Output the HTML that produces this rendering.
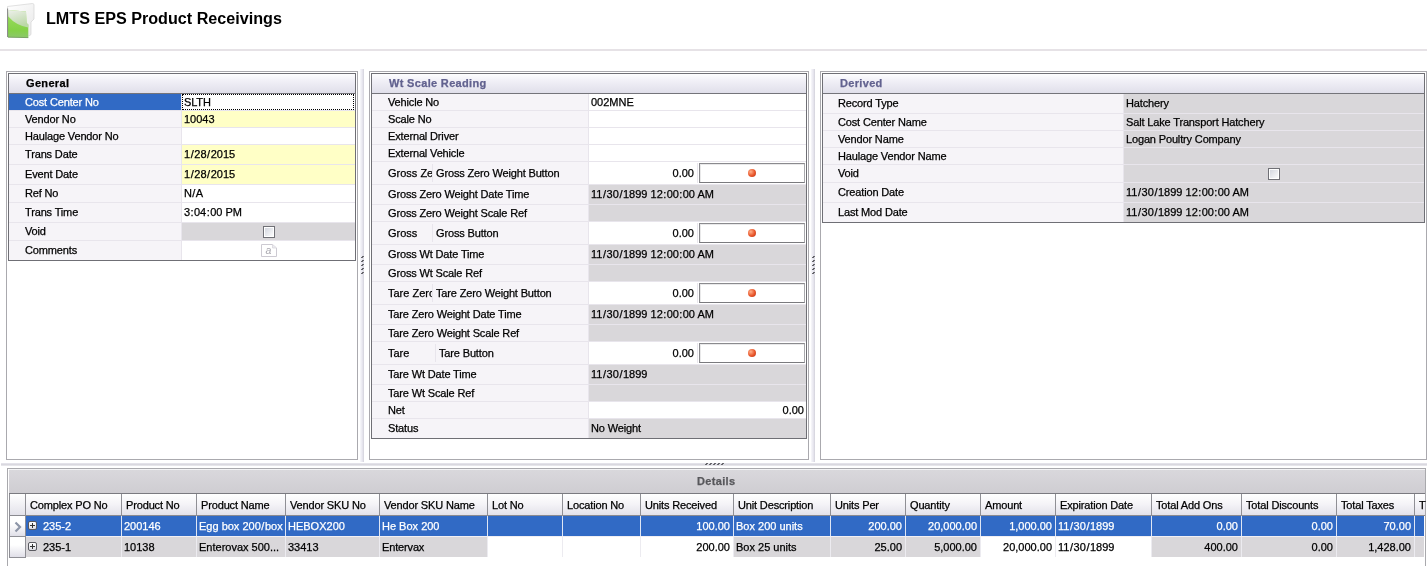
<!DOCTYPE html>
<html><head><meta charset="utf-8"><style>
html,body{margin:0;padding:0;background:#fff;width:1427px;height:566px;overflow:hidden;position:relative;}
.a{position:absolute;box-sizing:content-box;}
.t{font-family:"Liberation Sans",sans-serif;font-size:11px;color:#000;white-space:nowrap;-webkit-text-stroke:0.25px currentColor;}
</style></head><body><div class="a" style="left:0;top:0;width:1427px;height:566px;overflow:hidden;will-change:transform;">
<div class="a t" style="left:46px;top:8px;height:20px;line-height:20px;font-size:16.15px;font-weight:bold;letter-spacing:0;-webkit-text-stroke:0;">LMTS EPS Product Receivings</div>
<div class="a" style="left:0px;top:49px;width:1427px;height:2px;background:#e6e2e6;"></div>
<svg class="a" style="left:0px;top:0px" width="40" height="42" viewBox="0 0 40 42">
<defs>
<linearGradient id="pg" x1="0" y1="0" x2="1" y2="1"><stop offset="0" stop-color="#ffffff"/><stop offset="1" stop-color="#e8e8e8"/></linearGradient>
<linearGradient id="tg" x1="0" y1="0" x2="0.4" y2="1"><stop offset="0" stop-color="#eef0ec"/><stop offset="1" stop-color="#bcd8a8"/></linearGradient>
<linearGradient id="gg" x1="0" y1="0" x2="0" y2="1"><stop offset="0" stop-color="#9ee060"/><stop offset="0.75" stop-color="#84d048"/><stop offset="1" stop-color="#8cc86a"/></linearGradient>
</defs>
<path d="M7.5 6.5 L32.5 3.5 Q34 3.5 34 5 L34 19 L31 22 L31 34.5 L29 36 L7.5 37 Z" fill="url(#pg)" stroke="#d4d4d4" stroke-width="0.7"/>
<path d="M8 10 L26 11.5 L26.5 23 L28.3 24.5 L28.3 37.5 L8 37 Z" fill="url(#gg)"/>
<path d="M8 10 L26 11.5 L26.5 23 L28.3 24.5 L28.3 27.5 Q16 25.5 8.3 16.5 Z" fill="url(#tg)"/>
<path d="M7.6 8.5 L7.6 37" stroke="#7a7a7a" stroke-width="0.9"/>
<path d="M8 37.2 L28.3 37.6" stroke="#6f9a58" stroke-width="0.9"/>
</svg>
<div class="a" style="left:6px;top:71px;width:350px;height:387px;border:1px solid #aaa9ae;"></div>
<div class="a" style="left:8px;top:73px;width:346px;height:186px;border:1px solid #6f6f75;"></div>
<div class="a" style="left:9px;top:74px;width:346px;height:19px;background:linear-gradient(#fdfdfe,#f1f0f7 35%,#e0dfea);"></div>
<div class="a" style="left:9px;top:93px;width:346px;height:1px;background:#74747a;"></div>
<div class="a t" style="left:26px;top:74px;height:18px;line-height:18px;font-weight:bold;color:#000;letter-spacing:0.33px;">General</div>
<div class="a" style="left:9px;top:94px;width:172px;height:16px;background:#316ac5;"></div>
<div class="a" style="left:181px;top:94px;width:1px;height:16px;background:#e8e5ec;"></div>
<div class="a" style="left:182px;top:94px;width:173px;height:16px;background:white;"></div>
<div class="a" style="left:9px;top:110px;width:346px;height:1px;background:#e8e5ec;"></div>
<div class="a t" style="left:25px;top:94px;height:16px;line-height:16px;letter-spacing:-0.15px;color:#ffffff;">Cost Center No</div>
<div class="a t" style="left:184px;top:94px;height:16px;line-height:16px;letter-spacing:-0.15px;">SLTH</div>
<div class="a" style="left:9px;top:111px;width:172px;height:16px;background:#f6f4f8;"></div>
<div class="a" style="left:181px;top:111px;width:1px;height:16px;background:#e8e5ec;"></div>
<div class="a" style="left:182px;top:111px;width:173px;height:16px;background:#ffffc6;"></div>
<div class="a" style="left:9px;top:127px;width:346px;height:1px;background:#e8e5ec;"></div>
<div class="a t" style="left:25px;top:111px;height:16px;line-height:16px;letter-spacing:-0.15px;color:#000;">Vendor No</div>
<div class="a t" style="left:184px;top:111px;height:16px;line-height:16px;">10043</div>
<div class="a" style="left:9px;top:128px;width:172px;height:16px;background:#f6f4f8;"></div>
<div class="a" style="left:181px;top:128px;width:1px;height:16px;background:#e8e5ec;"></div>
<div class="a" style="left:182px;top:128px;width:173px;height:16px;background:#ffffff;"></div>
<div class="a" style="left:9px;top:144px;width:346px;height:1px;background:#e8e5ec;"></div>
<div class="a t" style="left:25px;top:128px;height:16px;line-height:16px;letter-spacing:-0.15px;color:#000;">Haulage Vendor No</div>
<div class="a" style="left:9px;top:145px;width:172px;height:19px;background:#f6f4f8;"></div>
<div class="a" style="left:181px;top:145px;width:1px;height:19px;background:#e8e5ec;"></div>
<div class="a" style="left:182px;top:145px;width:173px;height:19px;background:#ffffc6;"></div>
<div class="a" style="left:9px;top:164px;width:346px;height:1px;background:#e8e5ec;"></div>
<div class="a t" style="left:25px;top:146px;height:16px;line-height:16px;letter-spacing:-0.15px;color:#000;">Trans Date</div>
<div class="a t" style="left:184px;top:146px;height:16px;line-height:16px;">1<span style="padding:0 0.55px">/</span>28<span style="padding:0 0.55px">/</span>2015</div>
<div class="a" style="left:9px;top:165px;width:172px;height:19px;background:#f6f4f8;"></div>
<div class="a" style="left:181px;top:165px;width:1px;height:19px;background:#e8e5ec;"></div>
<div class="a" style="left:182px;top:165px;width:173px;height:19px;background:#ffffc6;"></div>
<div class="a" style="left:9px;top:184px;width:346px;height:1px;background:#e8e5ec;"></div>
<div class="a t" style="left:25px;top:166px;height:16px;line-height:16px;letter-spacing:-0.15px;color:#000;">Event Date</div>
<div class="a t" style="left:184px;top:166px;height:16px;line-height:16px;">1<span style="padding:0 0.55px">/</span>28<span style="padding:0 0.55px">/</span>2015</div>
<div class="a" style="left:9px;top:185px;width:172px;height:17px;background:#f6f4f8;"></div>
<div class="a" style="left:181px;top:185px;width:1px;height:17px;background:#e8e5ec;"></div>
<div class="a" style="left:182px;top:185px;width:173px;height:17px;background:#ffffff;"></div>
<div class="a" style="left:9px;top:202px;width:346px;height:1px;background:#e8e5ec;"></div>
<div class="a t" style="left:25px;top:185px;height:16px;line-height:16px;letter-spacing:-0.15px;color:#000;">Ref No</div>
<div class="a t" style="left:184px;top:185px;height:16px;line-height:16px;letter-spacing:-0.15px;">N<span style="padding:0 0.55px">/</span>A</div>
<div class="a" style="left:9px;top:203px;width:172px;height:19px;background:#f6f4f8;"></div>
<div class="a" style="left:181px;top:203px;width:1px;height:19px;background:#e8e5ec;"></div>
<div class="a" style="left:182px;top:203px;width:173px;height:19px;background:#ffffff;"></div>
<div class="a" style="left:9px;top:222px;width:346px;height:1px;background:#e8e5ec;"></div>
<div class="a t" style="left:25px;top:204px;height:16px;line-height:16px;letter-spacing:-0.15px;color:#000;">Trans Time</div>
<div class="a t" style="left:184px;top:204px;height:16px;line-height:16px;">3<span style="padding:0 0.42px">:</span>04<span style="padding:0 0.42px">:</span>00 PM</div>
<div class="a" style="left:9px;top:223px;width:172px;height:17px;background:#f6f4f8;"></div>
<div class="a" style="left:181px;top:223px;width:1px;height:17px;background:#e8e5ec;"></div>
<div class="a" style="left:182px;top:223px;width:173px;height:17px;background:#d9d7da;"></div>
<div class="a" style="left:9px;top:240px;width:346px;height:1px;background:#e8e5ec;"></div>
<div class="a t" style="left:25px;top:223px;height:16px;line-height:16px;letter-spacing:-0.15px;color:#000;">Void</div>
<div class="a" style="left:9px;top:241px;width:172px;height:19px;background:#f6f4f8;"></div>
<div class="a" style="left:181px;top:241px;width:1px;height:19px;background:#e8e5ec;"></div>
<div class="a" style="left:182px;top:241px;width:173px;height:19px;background:#ffffff;"></div>
<div class="a t" style="left:25px;top:242px;height:16px;line-height:16px;letter-spacing:-0.15px;color:#000;">Comments</div>
<div class="a" style="left:182px;top:94px;width:170px;height:14px;border:1px dotted #000;"></div>
<div class="a" style="left:263px;top:226px;width:10px;height:10px;border:1px solid #707076;background:linear-gradient(135deg,#d0d3dc,#ffffff);box-shadow:inset 0 0 0 1px #fff;"></div>
<svg class="a" style="left:260px;top:243px" width="18" height="15" viewBox="0 0 18 15"><path d="M1.5 1.5 L12.5 1.5 L16.5 5 L16.5 13.5 L1.5 13.5 Z" fill="#fff" stroke="#cdcad2" stroke-width="1"/><path d="M12.5 1.5 L12.5 5 L16.5 5" fill="#ecebf0" stroke="#d8d6dc" stroke-width="0.8"/><text x="5.5" y="11" font-family="Liberation Sans" font-style="italic" font-size="10.5" fill="#a8a6ae">a</text></svg>
<div class="a" style="left:369px;top:71px;width:438px;height:387px;border:1px solid #aaa9ae;"></div>
<div class="a" style="left:371px;top:73px;width:434px;height:364px;border:1px solid #6f6f75;"></div>
<div class="a" style="left:372px;top:74px;width:434px;height:19px;background:linear-gradient(#fdfdfe,#f1f0f7 35%,#e0dfea);"></div>
<div class="a" style="left:372px;top:93px;width:434px;height:1px;background:#74747a;"></div>
<div class="a t" style="left:389px;top:74px;height:18px;line-height:18px;font-weight:bold;color:#62628f;letter-spacing:0.33px;">Wt Scale Reading</div>
<div class="a" style="left:372px;top:94px;width:216px;height:16px;background:#f6f4f8;"></div>
<div class="a" style="left:588px;top:94px;width:1px;height:16px;background:#e8e5ec;"></div>
<div class="a" style="left:589px;top:94px;width:217px;height:16px;background:#ffffff;"></div>
<div class="a" style="left:372px;top:110px;width:434px;height:1px;background:#e8e5ec;"></div>
<div class="a t" style="left:388px;top:94px;height:16px;line-height:16px;letter-spacing:-0.15px;color:#000;">Vehicle No</div>
<div class="a t" style="left:591px;top:94px;height:16px;line-height:16px;">002MNE</div>
<div class="a" style="left:372px;top:111px;width:216px;height:16px;background:#f6f4f8;"></div>
<div class="a" style="left:588px;top:111px;width:1px;height:16px;background:#e8e5ec;"></div>
<div class="a" style="left:589px;top:111px;width:217px;height:16px;background:#ffffff;"></div>
<div class="a" style="left:372px;top:127px;width:434px;height:1px;background:#e8e5ec;"></div>
<div class="a t" style="left:388px;top:111px;height:16px;line-height:16px;letter-spacing:-0.15px;color:#000;">Scale No</div>
<div class="a" style="left:372px;top:128px;width:216px;height:16px;background:#f6f4f8;"></div>
<div class="a" style="left:588px;top:128px;width:1px;height:16px;background:#e8e5ec;"></div>
<div class="a" style="left:589px;top:128px;width:217px;height:16px;background:#ffffff;"></div>
<div class="a" style="left:372px;top:144px;width:434px;height:1px;background:#e8e5ec;"></div>
<div class="a t" style="left:388px;top:128px;height:16px;line-height:16px;letter-spacing:-0.15px;color:#000;">External Driver</div>
<div class="a" style="left:372px;top:145px;width:216px;height:16px;background:#f6f4f8;"></div>
<div class="a" style="left:588px;top:145px;width:1px;height:16px;background:#e8e5ec;"></div>
<div class="a" style="left:589px;top:145px;width:217px;height:16px;background:#ffffff;"></div>
<div class="a" style="left:372px;top:161px;width:434px;height:1px;background:#e8e5ec;"></div>
<div class="a t" style="left:388px;top:145px;height:16px;line-height:16px;letter-spacing:-0.15px;color:#000;">External Vehicle</div>
<div class="a" style="left:372px;top:162px;width:216px;height:22px;background:#f6f4f8;"></div>
<div class="a" style="left:588px;top:162px;width:1px;height:22px;background:#e8e5ec;"></div>
<div class="a" style="left:589px;top:162px;width:217px;height:22px;background:#ffffff;"></div>
<div class="a" style="left:372px;top:184px;width:434px;height:1px;background:#e8e5ec;"></div>
<div class="a" style="left:372px;top:185px;width:216px;height:19px;background:#f6f4f8;"></div>
<div class="a" style="left:588px;top:185px;width:1px;height:19px;background:#e8e5ec;"></div>
<div class="a" style="left:589px;top:185px;width:217px;height:19px;background:#d9d7da;"></div>
<div class="a" style="left:372px;top:204px;width:434px;height:1px;background:#e8e5ec;"></div>
<div class="a t" style="left:388px;top:186px;height:16px;line-height:16px;letter-spacing:-0.15px;color:#000;">Gross Zero Weight Date Time</div>
<div class="a t" style="left:591px;top:186px;height:16px;line-height:16px;">11<span style="padding:0 0.55px">/</span>30<span style="padding:0 0.55px">/</span>1899 12<span style="padding:0 0.42px">:</span>00<span style="padding:0 0.42px">:</span>00 AM</div>
<div class="a" style="left:372px;top:205px;width:216px;height:16px;background:#f6f4f8;"></div>
<div class="a" style="left:588px;top:205px;width:1px;height:16px;background:#e8e5ec;"></div>
<div class="a" style="left:589px;top:205px;width:217px;height:16px;background:#d9d7da;"></div>
<div class="a" style="left:372px;top:221px;width:434px;height:1px;background:#e8e5ec;"></div>
<div class="a t" style="left:388px;top:205px;height:16px;line-height:16px;letter-spacing:-0.15px;color:#000;">Gross Zero Weight Scale Ref</div>
<div class="a" style="left:372px;top:222px;width:216px;height:22px;background:#f6f4f8;"></div>
<div class="a" style="left:588px;top:222px;width:1px;height:22px;background:#e8e5ec;"></div>
<div class="a" style="left:589px;top:222px;width:217px;height:22px;background:#ffffff;"></div>
<div class="a" style="left:372px;top:244px;width:434px;height:1px;background:#e8e5ec;"></div>
<div class="a" style="left:372px;top:245px;width:216px;height:19px;background:#f6f4f8;"></div>
<div class="a" style="left:588px;top:245px;width:1px;height:19px;background:#e8e5ec;"></div>
<div class="a" style="left:589px;top:245px;width:217px;height:19px;background:#d9d7da;"></div>
<div class="a" style="left:372px;top:264px;width:434px;height:1px;background:#e8e5ec;"></div>
<div class="a t" style="left:388px;top:246px;height:16px;line-height:16px;letter-spacing:-0.15px;color:#000;">Gross Wt Date Time</div>
<div class="a t" style="left:591px;top:246px;height:16px;line-height:16px;">11<span style="padding:0 0.55px">/</span>30<span style="padding:0 0.55px">/</span>1899 12<span style="padding:0 0.42px">:</span>00<span style="padding:0 0.42px">:</span>00 AM</div>
<div class="a" style="left:372px;top:265px;width:216px;height:16px;background:#f6f4f8;"></div>
<div class="a" style="left:588px;top:265px;width:1px;height:16px;background:#e8e5ec;"></div>
<div class="a" style="left:589px;top:265px;width:217px;height:16px;background:#d9d7da;"></div>
<div class="a" style="left:372px;top:281px;width:434px;height:1px;background:#e8e5ec;"></div>
<div class="a t" style="left:388px;top:265px;height:16px;line-height:16px;letter-spacing:-0.15px;color:#000;">Gross Wt Scale Ref</div>
<div class="a" style="left:372px;top:282px;width:216px;height:22px;background:#f6f4f8;"></div>
<div class="a" style="left:588px;top:282px;width:1px;height:22px;background:#e8e5ec;"></div>
<div class="a" style="left:589px;top:282px;width:217px;height:22px;background:#ffffff;"></div>
<div class="a" style="left:372px;top:304px;width:434px;height:1px;background:#e8e5ec;"></div>
<div class="a" style="left:372px;top:305px;width:216px;height:19px;background:#f6f4f8;"></div>
<div class="a" style="left:588px;top:305px;width:1px;height:19px;background:#e8e5ec;"></div>
<div class="a" style="left:589px;top:305px;width:217px;height:19px;background:#d9d7da;"></div>
<div class="a" style="left:372px;top:324px;width:434px;height:1px;background:#e8e5ec;"></div>
<div class="a t" style="left:388px;top:306px;height:16px;line-height:16px;letter-spacing:-0.15px;color:#000;">Tare Zero Weight Date Time</div>
<div class="a t" style="left:591px;top:306px;height:16px;line-height:16px;">11<span style="padding:0 0.55px">/</span>30<span style="padding:0 0.55px">/</span>1899 12<span style="padding:0 0.42px">:</span>00<span style="padding:0 0.42px">:</span>00 AM</div>
<div class="a" style="left:372px;top:325px;width:216px;height:16px;background:#f6f4f8;"></div>
<div class="a" style="left:588px;top:325px;width:1px;height:16px;background:#e8e5ec;"></div>
<div class="a" style="left:589px;top:325px;width:217px;height:16px;background:#d9d7da;"></div>
<div class="a" style="left:372px;top:341px;width:434px;height:1px;background:#e8e5ec;"></div>
<div class="a t" style="left:388px;top:325px;height:16px;line-height:16px;letter-spacing:-0.15px;color:#000;">Tare Zero Weight Scale Ref</div>
<div class="a" style="left:372px;top:342px;width:216px;height:22px;background:#f6f4f8;"></div>
<div class="a" style="left:588px;top:342px;width:1px;height:22px;background:#e8e5ec;"></div>
<div class="a" style="left:589px;top:342px;width:217px;height:22px;background:#ffffff;"></div>
<div class="a" style="left:372px;top:364px;width:434px;height:1px;background:#e8e5ec;"></div>
<div class="a" style="left:372px;top:365px;width:216px;height:19px;background:#f6f4f8;"></div>
<div class="a" style="left:588px;top:365px;width:1px;height:19px;background:#e8e5ec;"></div>
<div class="a" style="left:589px;top:365px;width:217px;height:19px;background:#d9d7da;"></div>
<div class="a" style="left:372px;top:384px;width:434px;height:1px;background:#e8e5ec;"></div>
<div class="a t" style="left:388px;top:366px;height:16px;line-height:16px;letter-spacing:-0.15px;color:#000;">Tare Wt Date Time</div>
<div class="a t" style="left:591px;top:366px;height:16px;line-height:16px;">11<span style="padding:0 0.55px">/</span>30<span style="padding:0 0.55px">/</span>1899</div>
<div class="a" style="left:372px;top:385px;width:216px;height:16px;background:#f6f4f8;"></div>
<div class="a" style="left:588px;top:385px;width:1px;height:16px;background:#e8e5ec;"></div>
<div class="a" style="left:589px;top:385px;width:217px;height:16px;background:#d9d7da;"></div>
<div class="a" style="left:372px;top:401px;width:434px;height:1px;background:#e8e5ec;"></div>
<div class="a t" style="left:388px;top:385px;height:16px;line-height:16px;letter-spacing:-0.15px;color:#000;">Tare Wt Scale Ref</div>
<div class="a" style="left:372px;top:402px;width:216px;height:16px;background:#f6f4f8;"></div>
<div class="a" style="left:588px;top:402px;width:1px;height:16px;background:#e8e5ec;"></div>
<div class="a" style="left:589px;top:402px;width:217px;height:16px;background:#ffffff;"></div>
<div class="a" style="left:372px;top:418px;width:434px;height:1px;background:#e8e5ec;"></div>
<div class="a t" style="left:388px;top:402px;height:16px;line-height:16px;letter-spacing:-0.15px;color:#000;">Net</div>
<div class="a" style="left:372px;top:419px;width:216px;height:19px;background:#f6f4f8;"></div>
<div class="a" style="left:588px;top:419px;width:1px;height:19px;background:#e8e5ec;"></div>
<div class="a" style="left:589px;top:419px;width:217px;height:19px;background:#d9d7da;"></div>
<div class="a t" style="left:388px;top:420px;height:16px;line-height:16px;letter-spacing:-0.15px;color:#000;">Status</div>
<div class="a t" style="left:591px;top:420px;height:16px;line-height:16px;letter-spacing:-0.15px;">No Weight</div>
<div class="a t" style="left:388px;top:165px;width:44px;overflow:hidden;height:16px;line-height:16px;">Gross Zero</div>
<div class="a" style="left:432px;top:164px;width:1px;height:18px;background:#e8e5ec;"></div>
<div class="a t" style="left:436px;top:165px;height:16px;line-height:16px;letter-spacing:-0.15px;">Gross Zero Weight Button</div>
<div class="a t" style="right:733px;top:165px;height:16px;line-height:16px;">0.00</div>
<div class="a" style="left:697px;top:163px;width:1px;height:20px;background:#e8e5ec;"></div>
<div class="a" style="left:699px;top:163px;width:104px;height:18px;border:1px solid #8a8a8e;border-right-color:#a9a9ad;border-bottom-color:#7a7a7e;background:#fff;box-shadow:inset 1px 1px 0 #e9e9ea;"></div>
<div class="a" style="left:748px;top:169px;width:8px;height:8px;border-radius:50%;background:radial-gradient(circle at 35% 35%,#ffb08a,#e8552a 55%,#b33a1a);"></div>
<div class="a t" style="left:388px;top:225px;width:44px;overflow:hidden;height:16px;line-height:16px;">Gross</div>
<div class="a" style="left:432px;top:224px;width:1px;height:18px;background:#e8e5ec;"></div>
<div class="a t" style="left:436px;top:225px;height:16px;line-height:16px;letter-spacing:-0.15px;">Gross Button</div>
<div class="a t" style="right:733px;top:225px;height:16px;line-height:16px;">0.00</div>
<div class="a" style="left:697px;top:223px;width:1px;height:20px;background:#e8e5ec;"></div>
<div class="a" style="left:699px;top:223px;width:104px;height:18px;border:1px solid #8a8a8e;border-right-color:#a9a9ad;border-bottom-color:#7a7a7e;background:#fff;box-shadow:inset 1px 1px 0 #e9e9ea;"></div>
<div class="a" style="left:748px;top:229px;width:8px;height:8px;border-radius:50%;background:radial-gradient(circle at 35% 35%,#ffb08a,#e8552a 55%,#b33a1a);"></div>
<div class="a t" style="left:388px;top:285px;width:44px;overflow:hidden;height:16px;line-height:16px;">Tare Zero</div>
<div class="a" style="left:432px;top:284px;width:1px;height:18px;background:#e8e5ec;"></div>
<div class="a t" style="left:436px;top:285px;height:16px;line-height:16px;letter-spacing:-0.15px;">Tare Zero Weight Button</div>
<div class="a t" style="right:733px;top:285px;height:16px;line-height:16px;">0.00</div>
<div class="a" style="left:697px;top:283px;width:1px;height:20px;background:#e8e5ec;"></div>
<div class="a" style="left:699px;top:283px;width:104px;height:18px;border:1px solid #8a8a8e;border-right-color:#a9a9ad;border-bottom-color:#7a7a7e;background:#fff;box-shadow:inset 1px 1px 0 #e9e9ea;"></div>
<div class="a" style="left:748px;top:289px;width:8px;height:8px;border-radius:50%;background:radial-gradient(circle at 35% 35%,#ffb08a,#e8552a 55%,#b33a1a);"></div>
<div class="a t" style="left:388px;top:345px;width:47px;overflow:hidden;height:16px;line-height:16px;">Tare</div>
<div class="a" style="left:435px;top:344px;width:1px;height:18px;background:#e8e5ec;"></div>
<div class="a t" style="left:439px;top:345px;height:16px;line-height:16px;letter-spacing:-0.15px;">Tare Button</div>
<div class="a t" style="right:733px;top:345px;height:16px;line-height:16px;">0.00</div>
<div class="a" style="left:697px;top:343px;width:1px;height:20px;background:#e8e5ec;"></div>
<div class="a" style="left:699px;top:343px;width:104px;height:18px;border:1px solid #8a8a8e;border-right-color:#a9a9ad;border-bottom-color:#7a7a7e;background:#fff;box-shadow:inset 1px 1px 0 #e9e9ea;"></div>
<div class="a" style="left:748px;top:349px;width:8px;height:8px;border-radius:50%;background:radial-gradient(circle at 35% 35%,#ffb08a,#e8552a 55%,#b33a1a);"></div>
<div class="a t" style="right:623px;top:402px;height:16px;line-height:16px;">0.00</div>
<div class="a" style="left:820px;top:71px;width:605px;height:387px;border:1px solid #aaa9ae;"></div>
<div class="a" style="left:822px;top:73px;width:601px;height:148px;border:1px solid #6f6f75;"></div>
<div class="a" style="left:823px;top:74px;width:601px;height:19px;background:linear-gradient(#fdfdfe,#f1f0f7 35%,#e0dfea);"></div>
<div class="a" style="left:823px;top:93px;width:601px;height:1px;background:#74747a;"></div>
<div class="a t" style="left:840px;top:74px;height:18px;line-height:18px;font-weight:bold;color:#62628f;letter-spacing:0.33px;">Derived</div>
<div class="a" style="left:823px;top:94px;width:300px;height:19px;background:#f6f4f8;"></div>
<div class="a" style="left:1123px;top:94px;width:1px;height:19px;background:#e8e5ec;"></div>
<div class="a" style="left:1124px;top:94px;width:300px;height:19px;background:#d9d7da;"></div>
<div class="a" style="left:823px;top:113px;width:601px;height:1px;background:#e8e5ec;"></div>
<div class="a t" style="left:838px;top:95px;height:16px;line-height:16px;letter-spacing:-0.15px;color:#000;">Record Type</div>
<div class="a t" style="left:1126px;top:95px;height:16px;line-height:16px;letter-spacing:-0.15px;">Hatchery</div>
<div class="a" style="left:823px;top:114px;width:300px;height:16px;background:#f6f4f8;"></div>
<div class="a" style="left:1123px;top:114px;width:1px;height:16px;background:#e8e5ec;"></div>
<div class="a" style="left:1124px;top:114px;width:300px;height:16px;background:#d9d7da;"></div>
<div class="a" style="left:823px;top:130px;width:601px;height:1px;background:#e8e5ec;"></div>
<div class="a t" style="left:838px;top:114px;height:16px;line-height:16px;letter-spacing:-0.15px;color:#000;">Cost Center Name</div>
<div class="a t" style="left:1126px;top:114px;height:16px;line-height:16px;letter-spacing:-0.15px;">Salt Lake Transport Hatchery</div>
<div class="a" style="left:823px;top:131px;width:300px;height:16px;background:#f6f4f8;"></div>
<div class="a" style="left:1123px;top:131px;width:1px;height:16px;background:#e8e5ec;"></div>
<div class="a" style="left:1124px;top:131px;width:300px;height:16px;background:#d9d7da;"></div>
<div class="a" style="left:823px;top:147px;width:601px;height:1px;background:#e8e5ec;"></div>
<div class="a t" style="left:838px;top:131px;height:16px;line-height:16px;letter-spacing:-0.15px;color:#000;">Vendor Name</div>
<div class="a t" style="left:1126px;top:131px;height:16px;line-height:16px;letter-spacing:-0.15px;">Logan Poultry Company</div>
<div class="a" style="left:823px;top:148px;width:300px;height:16px;background:#f6f4f8;"></div>
<div class="a" style="left:1123px;top:148px;width:1px;height:16px;background:#e8e5ec;"></div>
<div class="a" style="left:1124px;top:148px;width:300px;height:16px;background:#d9d7da;"></div>
<div class="a" style="left:823px;top:164px;width:601px;height:1px;background:#e8e5ec;"></div>
<div class="a t" style="left:838px;top:148px;height:16px;line-height:16px;letter-spacing:-0.15px;color:#000;">Haulage Vendor Name</div>
<div class="a" style="left:823px;top:165px;width:300px;height:17px;background:#f6f4f8;"></div>
<div class="a" style="left:1123px;top:165px;width:1px;height:17px;background:#e8e5ec;"></div>
<div class="a" style="left:1124px;top:165px;width:300px;height:17px;background:#d9d7da;"></div>
<div class="a" style="left:823px;top:182px;width:601px;height:1px;background:#e8e5ec;"></div>
<div class="a t" style="left:838px;top:165px;height:16px;line-height:16px;letter-spacing:-0.15px;color:#000;">Void</div>
<div class="a" style="left:823px;top:183px;width:300px;height:19px;background:#f6f4f8;"></div>
<div class="a" style="left:1123px;top:183px;width:1px;height:19px;background:#e8e5ec;"></div>
<div class="a" style="left:1124px;top:183px;width:300px;height:19px;background:#d9d7da;"></div>
<div class="a" style="left:823px;top:202px;width:601px;height:1px;background:#e8e5ec;"></div>
<div class="a t" style="left:838px;top:184px;height:16px;line-height:16px;letter-spacing:-0.15px;color:#000;">Creation Date</div>
<div class="a t" style="left:1126px;top:184px;height:16px;line-height:16px;">11<span style="padding:0 0.55px">/</span>30<span style="padding:0 0.55px">/</span>1899 12<span style="padding:0 0.42px">:</span>00<span style="padding:0 0.42px">:</span>00 AM</div>
<div class="a" style="left:823px;top:203px;width:300px;height:19px;background:#f6f4f8;"></div>
<div class="a" style="left:1123px;top:203px;width:1px;height:19px;background:#e8e5ec;"></div>
<div class="a" style="left:1124px;top:203px;width:300px;height:19px;background:#d9d7da;"></div>
<div class="a t" style="left:838px;top:204px;height:16px;line-height:16px;letter-spacing:-0.15px;color:#000;">Last Mod Date</div>
<div class="a t" style="left:1126px;top:204px;height:16px;line-height:16px;">11<span style="padding:0 0.55px">/</span>30<span style="padding:0 0.55px">/</span>1899 12<span style="padding:0 0.42px">:</span>00<span style="padding:0 0.42px">:</span>00 AM</div>
<div class="a" style="left:1268px;top:168px;width:10px;height:10px;border:1px solid #707076;background:linear-gradient(135deg,#d0d3dc,#ffffff);box-shadow:inset 0 0 0 1px #fff;"></div>
<div class="a" style="left:360px;top:69px;width:4px;height:393px;background:linear-gradient(90deg,#f8f8fb,#e6e5ee 60%,#d3d2db);"></div>
<div class="a" style="left:811px;top:69px;width:4px;height:393px;background:linear-gradient(90deg,#f8f8fb,#e6e5ee 60%,#d3d2db);"></div>
<div class="a" style="left:362px;top:256px;width:2px;height:1px;background:#66666c;"></div>
<div class="a" style="left:361px;top:257px;width:2px;height:1px;background:#66666c;"></div>
<div class="a" style="left:813px;top:256px;width:2px;height:1px;background:#66666c;"></div>
<div class="a" style="left:812px;top:257px;width:2px;height:1px;background:#66666c;"></div>
<div class="a" style="left:362px;top:260px;width:2px;height:1px;background:#66666c;"></div>
<div class="a" style="left:361px;top:261px;width:2px;height:1px;background:#66666c;"></div>
<div class="a" style="left:813px;top:260px;width:2px;height:1px;background:#66666c;"></div>
<div class="a" style="left:812px;top:261px;width:2px;height:1px;background:#66666c;"></div>
<div class="a" style="left:362px;top:264px;width:2px;height:1px;background:#66666c;"></div>
<div class="a" style="left:361px;top:265px;width:2px;height:1px;background:#66666c;"></div>
<div class="a" style="left:813px;top:264px;width:2px;height:1px;background:#66666c;"></div>
<div class="a" style="left:812px;top:265px;width:2px;height:1px;background:#66666c;"></div>
<div class="a" style="left:362px;top:268px;width:2px;height:1px;background:#66666c;"></div>
<div class="a" style="left:361px;top:269px;width:2px;height:1px;background:#66666c;"></div>
<div class="a" style="left:813px;top:268px;width:2px;height:1px;background:#66666c;"></div>
<div class="a" style="left:812px;top:269px;width:2px;height:1px;background:#66666c;"></div>
<div class="a" style="left:362px;top:272px;width:2px;height:1px;background:#66666c;"></div>
<div class="a" style="left:361px;top:273px;width:2px;height:1px;background:#66666c;"></div>
<div class="a" style="left:813px;top:272px;width:2px;height:1px;background:#66666c;"></div>
<div class="a" style="left:812px;top:273px;width:2px;height:1px;background:#66666c;"></div>
<div class="a" style="left:1px;top:463px;width:1426px;height:3px;background:linear-gradient(#e8e7ee,#d9d8df,#ececf0);"></div>
<div class="a" style="left:706px;top:463px;width:2px;height:1px;background:#66666c;"></div>
<div class="a" style="left:705px;top:464px;width:2px;height:1px;background:#66666c;"></div>
<div class="a" style="left:710px;top:463px;width:2px;height:1px;background:#66666c;"></div>
<div class="a" style="left:709px;top:464px;width:2px;height:1px;background:#66666c;"></div>
<div class="a" style="left:714px;top:463px;width:2px;height:1px;background:#66666c;"></div>
<div class="a" style="left:713px;top:464px;width:2px;height:1px;background:#66666c;"></div>
<div class="a" style="left:718px;top:463px;width:2px;height:1px;background:#66666c;"></div>
<div class="a" style="left:717px;top:464px;width:2px;height:1px;background:#66666c;"></div>
<div class="a" style="left:722px;top:463px;width:2px;height:1px;background:#66666c;"></div>
<div class="a" style="left:721px;top:464px;width:2px;height:1px;background:#66666c;"></div>
<div class="a" style="left:7px;top:468px;width:1417px;height:110px;border:1px solid #a9a9ad;"></div>
<div class="a" style="left:9px;top:470px;width:1416px;height:23px;background:linear-gradient(#d9d8dc,#cfcdd2);"></div>
<div class="a" style="left:9px;top:469px;width:1416px;height:1px;background:#f4f4f6;"></div>
<div class="a t" style="left:697px;top:472px;height:18px;line-height:18px;font-weight:bold;color:#58585c;letter-spacing:0.33px;">Details</div>
<div class="a" style="left:9px;top:493px;width:1416px;height:1px;background:#7a7a80;"></div>
<div class="a" style="left:9px;top:494px;width:1416px;height:21px;background:linear-gradient(#ffffff,#f4f3f7 50%,#e3e2ea);"></div>
<div class="a" style="left:9px;top:515px;width:1416px;height:1px;background:#8a8a90;"></div>
<div class="a" style="left:25px;top:494px;width:1px;height:63px;background:#8f8f95;"></div>
<div class="a" style="left:121px;top:494px;width:1px;height:63px;background:#8f8f95;"></div>
<div class="a" style="left:196px;top:494px;width:1px;height:63px;background:#8f8f95;"></div>
<div class="a" style="left:285px;top:494px;width:1px;height:63px;background:#8f8f95;"></div>
<div class="a" style="left:379px;top:494px;width:1px;height:63px;background:#8f8f95;"></div>
<div class="a" style="left:487px;top:494px;width:1px;height:63px;background:#8f8f95;"></div>
<div class="a" style="left:562px;top:494px;width:1px;height:63px;background:#8f8f95;"></div>
<div class="a" style="left:640px;top:494px;width:1px;height:63px;background:#8f8f95;"></div>
<div class="a" style="left:733px;top:494px;width:1px;height:63px;background:#8f8f95;"></div>
<div class="a" style="left:830px;top:494px;width:1px;height:63px;background:#8f8f95;"></div>
<div class="a" style="left:905px;top:494px;width:1px;height:63px;background:#8f8f95;"></div>
<div class="a" style="left:980px;top:494px;width:1px;height:63px;background:#8f8f95;"></div>
<div class="a" style="left:1055px;top:494px;width:1px;height:63px;background:#8f8f95;"></div>
<div class="a" style="left:1151px;top:494px;width:1px;height:63px;background:#8f8f95;"></div>
<div class="a" style="left:1241px;top:494px;width:1px;height:63px;background:#8f8f95;"></div>
<div class="a" style="left:1336px;top:494px;width:1px;height:63px;background:#8f8f95;"></div>
<div class="a" style="left:1414px;top:494px;width:1px;height:63px;background:#8f8f95;"></div>
<div class="a t" style="left:30px;top:497px;height:16px;line-height:16px;letter-spacing:-0.15px;">Complex PO No</div>
<div class="a t" style="left:126px;top:497px;height:16px;line-height:16px;letter-spacing:-0.15px;">Product No</div>
<div class="a t" style="left:201px;top:497px;height:16px;line-height:16px;letter-spacing:-0.15px;">Product Name</div>
<div class="a t" style="left:290px;top:497px;height:16px;line-height:16px;letter-spacing:-0.15px;">Vendor SKU No</div>
<div class="a t" style="left:384px;top:497px;height:16px;line-height:16px;letter-spacing:-0.15px;">Vendor SKU Name</div>
<div class="a t" style="left:492px;top:497px;height:16px;line-height:16px;letter-spacing:-0.15px;">Lot No</div>
<div class="a t" style="left:567px;top:497px;height:16px;line-height:16px;letter-spacing:-0.15px;">Location No</div>
<div class="a t" style="left:645px;top:497px;height:16px;line-height:16px;letter-spacing:-0.15px;">Units Received</div>
<div class="a t" style="left:738px;top:497px;height:16px;line-height:16px;letter-spacing:-0.15px;">Unit Description</div>
<div class="a t" style="left:835px;top:497px;height:16px;line-height:16px;letter-spacing:-0.15px;">Units Per</div>
<div class="a t" style="left:910px;top:497px;height:16px;line-height:16px;letter-spacing:-0.15px;">Quantity</div>
<div class="a t" style="left:985px;top:497px;height:16px;line-height:16px;letter-spacing:-0.15px;">Amount</div>
<div class="a t" style="left:1060px;top:497px;height:16px;line-height:16px;letter-spacing:-0.15px;">Expiration Date</div>
<div class="a t" style="left:1156px;top:497px;height:16px;line-height:16px;letter-spacing:-0.15px;">Total Add Ons</div>
<div class="a t" style="left:1246px;top:497px;height:16px;line-height:16px;letter-spacing:-0.15px;">Total Discounts</div>
<div class="a t" style="left:1341px;top:497px;height:16px;line-height:16px;letter-spacing:-0.15px;">Total Taxes</div>
<div class="a t" style="left:1419px;top:497px;height:16px;line-height:16px;letter-spacing:-0.15px;">T</div>
<div class="a" style="left:9px;top:494px;width:1px;height:64px;background:#8f8f95;"></div>
<div class="a" style="left:10px;top:494px;width:15px;height:21px;background:linear-gradient(#ffffff,#e3e2ea);"></div>
<div class="a" style="left:10px;top:516px;width:15px;height:20px;background:linear-gradient(#ffffff 40%,#e0dfe8);"></div>
<div class="a" style="left:10px;top:537px;width:15px;height:20px;background:linear-gradient(#ffffff 40%,#e0dfe8);"></div>
<div class="a" style="left:9px;top:536px;width:17px;height:1px;background:#8f8f95;"></div>
<div class="a" style="left:26px;top:536px;width:1399px;height:1px;background:#f0eff4;"></div>
<div class="a" style="left:9px;top:557px;width:17px;height:1px;background:#8f8f95;"></div>
<div class="a" style="left:26px;top:516px;width:95px;height:20px;background:#316ac5;"></div>
<div class="a" style="left:26px;top:537px;width:95px;height:20px;background:#d9d7da;"></div>
<div class="a" style="left:122px;top:516px;width:74px;height:20px;background:#316ac5;"></div>
<div class="a" style="left:122px;top:537px;width:74px;height:20px;background:#d9d7da;"></div>
<div class="a" style="left:197px;top:516px;width:88px;height:20px;background:#316ac5;"></div>
<div class="a" style="left:197px;top:537px;width:88px;height:20px;background:#d9d7da;"></div>
<div class="a" style="left:286px;top:516px;width:93px;height:20px;background:#316ac5;"></div>
<div class="a" style="left:286px;top:537px;width:93px;height:20px;background:#d9d7da;"></div>
<div class="a" style="left:380px;top:516px;width:107px;height:20px;background:#316ac5;"></div>
<div class="a" style="left:380px;top:537px;width:107px;height:20px;background:#d9d7da;"></div>
<div class="a" style="left:488px;top:516px;width:74px;height:20px;background:#316ac5;"></div>
<div class="a" style="left:488px;top:537px;width:74px;height:20px;background:#ffffff;"></div>
<div class="a" style="left:563px;top:516px;width:77px;height:20px;background:#316ac5;"></div>
<div class="a" style="left:563px;top:537px;width:77px;height:20px;background:#ffffff;"></div>
<div class="a" style="left:641px;top:516px;width:92px;height:20px;background:#316ac5;"></div>
<div class="a" style="left:641px;top:537px;width:92px;height:20px;background:#ffffff;"></div>
<div class="a" style="left:734px;top:516px;width:96px;height:20px;background:#316ac5;"></div>
<div class="a" style="left:734px;top:537px;width:96px;height:20px;background:#d9d7da;"></div>
<div class="a" style="left:831px;top:516px;width:74px;height:20px;background:#316ac5;"></div>
<div class="a" style="left:831px;top:537px;width:74px;height:20px;background:#d9d7da;"></div>
<div class="a" style="left:906px;top:516px;width:74px;height:20px;background:#316ac5;"></div>
<div class="a" style="left:906px;top:537px;width:74px;height:20px;background:#d9d7da;"></div>
<div class="a" style="left:981px;top:516px;width:74px;height:20px;background:#316ac5;"></div>
<div class="a" style="left:981px;top:537px;width:74px;height:20px;background:#ffffff;"></div>
<div class="a" style="left:1056px;top:516px;width:95px;height:20px;background:#316ac5;"></div>
<div class="a" style="left:1056px;top:537px;width:95px;height:20px;background:#ffffff;"></div>
<div class="a" style="left:1152px;top:516px;width:89px;height:20px;background:#316ac5;"></div>
<div class="a" style="left:1152px;top:537px;width:89px;height:20px;background:#d9d7da;"></div>
<div class="a" style="left:1242px;top:516px;width:94px;height:20px;background:#316ac5;"></div>
<div class="a" style="left:1242px;top:537px;width:94px;height:20px;background:#d9d7da;"></div>
<div class="a" style="left:1337px;top:516px;width:77px;height:20px;background:#316ac5;"></div>
<div class="a" style="left:1337px;top:537px;width:77px;height:20px;background:#d9d7da;"></div>
<div class="a" style="left:1415px;top:516px;width:9px;height:20px;background:#316ac5;"></div>
<div class="a" style="left:1415px;top:537px;width:9px;height:20px;background:#d9d7da;"></div>
<div class="a" style="left:121px;top:516px;width:1px;height:20px;background:#dfe6f4;"></div>
<div class="a" style="left:121px;top:537px;width:1px;height:20px;background:#ecebf0;"></div>
<div class="a" style="left:196px;top:516px;width:1px;height:20px;background:#dfe6f4;"></div>
<div class="a" style="left:196px;top:537px;width:1px;height:20px;background:#ecebf0;"></div>
<div class="a" style="left:285px;top:516px;width:1px;height:20px;background:#dfe6f4;"></div>
<div class="a" style="left:285px;top:537px;width:1px;height:20px;background:#ecebf0;"></div>
<div class="a" style="left:379px;top:516px;width:1px;height:20px;background:#dfe6f4;"></div>
<div class="a" style="left:379px;top:537px;width:1px;height:20px;background:#ecebf0;"></div>
<div class="a" style="left:487px;top:516px;width:1px;height:20px;background:#dfe6f4;"></div>
<div class="a" style="left:487px;top:537px;width:1px;height:20px;background:#ecebf0;"></div>
<div class="a" style="left:562px;top:516px;width:1px;height:20px;background:#dfe6f4;"></div>
<div class="a" style="left:562px;top:537px;width:1px;height:20px;background:#ecebf0;"></div>
<div class="a" style="left:640px;top:516px;width:1px;height:20px;background:#dfe6f4;"></div>
<div class="a" style="left:640px;top:537px;width:1px;height:20px;background:#ecebf0;"></div>
<div class="a" style="left:733px;top:516px;width:1px;height:20px;background:#dfe6f4;"></div>
<div class="a" style="left:733px;top:537px;width:1px;height:20px;background:#ecebf0;"></div>
<div class="a" style="left:830px;top:516px;width:1px;height:20px;background:#dfe6f4;"></div>
<div class="a" style="left:830px;top:537px;width:1px;height:20px;background:#ecebf0;"></div>
<div class="a" style="left:905px;top:516px;width:1px;height:20px;background:#dfe6f4;"></div>
<div class="a" style="left:905px;top:537px;width:1px;height:20px;background:#ecebf0;"></div>
<div class="a" style="left:980px;top:516px;width:1px;height:20px;background:#dfe6f4;"></div>
<div class="a" style="left:980px;top:537px;width:1px;height:20px;background:#ecebf0;"></div>
<div class="a" style="left:1055px;top:516px;width:1px;height:20px;background:#dfe6f4;"></div>
<div class="a" style="left:1055px;top:537px;width:1px;height:20px;background:#ecebf0;"></div>
<div class="a" style="left:1151px;top:516px;width:1px;height:20px;background:#dfe6f4;"></div>
<div class="a" style="left:1151px;top:537px;width:1px;height:20px;background:#ecebf0;"></div>
<div class="a" style="left:1241px;top:516px;width:1px;height:20px;background:#dfe6f4;"></div>
<div class="a" style="left:1241px;top:537px;width:1px;height:20px;background:#ecebf0;"></div>
<div class="a" style="left:1336px;top:516px;width:1px;height:20px;background:#dfe6f4;"></div>
<div class="a" style="left:1336px;top:537px;width:1px;height:20px;background:#ecebf0;"></div>
<div class="a" style="left:1414px;top:516px;width:1px;height:20px;background:#dfe6f4;"></div>
<div class="a" style="left:1414px;top:537px;width:1px;height:20px;background:#ecebf0;"></div>
<div class="a t" style="left:43px;top:518px;height:16px;line-height:16px;color:#fff;">235-2</div>
<div class="a t" style="left:43px;top:539px;height:16px;line-height:16px;color:#000;">235-1</div>
<div class="a t" style="left:124px;top:518px;height:16px;line-height:16px;color:#fff;">200146</div>
<div class="a t" style="left:124px;top:539px;height:16px;line-height:16px;color:#000;">10138</div>
<div class="a t" style="left:199px;top:518px;height:16px;line-height:16px;color:#fff;">Egg box 200<span style="padding:0 0.55px">/</span>box</div>
<div class="a t" style="left:199px;top:539px;height:16px;line-height:16px;color:#000;">Enterovax 500...</div>
<div class="a t" style="left:288px;top:518px;height:16px;line-height:16px;color:#fff;">HEBOX200</div>
<div class="a t" style="left:288px;top:539px;height:16px;line-height:16px;color:#000;">33413</div>
<div class="a t" style="left:382px;top:518px;height:16px;line-height:16px;color:#fff;">He Box 200</div>
<div class="a t" style="left:382px;top:539px;height:16px;line-height:16px;letter-spacing:-0.15px;color:#000;">Entervax</div>
<div class="a t" style="right:697px;top:518px;height:16px;line-height:16px;color:#fff;">100.00</div>
<div class="a t" style="right:697px;top:539px;height:16px;line-height:16px;color:#000;">200.00</div>
<div class="a t" style="left:736px;top:518px;height:16px;line-height:16px;color:#fff;">Box 200 units</div>
<div class="a t" style="left:736px;top:539px;height:16px;line-height:16px;color:#000;">Box 25 units</div>
<div class="a t" style="right:525px;top:518px;height:16px;line-height:16px;color:#fff;">200.00</div>
<div class="a t" style="right:525px;top:539px;height:16px;line-height:16px;color:#000;">25.00</div>
<div class="a t" style="right:450px;top:518px;height:16px;line-height:16px;color:#fff;">20,000.00</div>
<div class="a t" style="right:450px;top:539px;height:16px;line-height:16px;color:#000;">5,000.00</div>
<div class="a t" style="right:375px;top:518px;height:16px;line-height:16px;color:#fff;">1,000.00</div>
<div class="a t" style="right:375px;top:539px;height:16px;line-height:16px;color:#000;">20,000.00</div>
<div class="a t" style="left:1058px;top:518px;height:16px;line-height:16px;color:#fff;">11<span style="padding:0 0.55px">/</span>30<span style="padding:0 0.55px">/</span>1899</div>
<div class="a t" style="left:1058px;top:539px;height:16px;line-height:16px;color:#000;">11<span style="padding:0 0.55px">/</span>30<span style="padding:0 0.55px">/</span>1899</div>
<div class="a t" style="right:189px;top:518px;height:16px;line-height:16px;color:#fff;">0.00</div>
<div class="a t" style="right:189px;top:539px;height:16px;line-height:16px;color:#000;">400.00</div>
<div class="a t" style="right:94px;top:518px;height:16px;line-height:16px;color:#fff;">0.00</div>
<div class="a t" style="right:94px;top:539px;height:16px;line-height:16px;color:#000;">0.00</div>
<div class="a t" style="right:16px;top:518px;height:16px;line-height:16px;color:#fff;">70.00</div>
<div class="a t" style="right:16px;top:539px;height:16px;line-height:16px;color:#000;">1,428.00</div>
<div class="a" style="left:28px;top:521px;width:7px;height:7px;border:1px solid #5a5a60;border-radius:2px;background:linear-gradient(#ffffff,#dcdce2);"></div>
<div class="a" style="left:30px;top:525px;width:5px;height:1px;background:#333;"></div>
<div class="a" style="left:32px;top:523px;width:1px;height:5px;background:#333;"></div>
<div class="a" style="left:28px;top:542px;width:7px;height:7px;border:1px solid #5a5a60;border-radius:2px;background:linear-gradient(#ffffff,#dcdce2);"></div>
<div class="a" style="left:30px;top:546px;width:5px;height:1px;background:#333;"></div>
<div class="a" style="left:32px;top:544px;width:1px;height:5px;background:#333;"></div>
<svg class="a" style="left:13px;top:521px" width="10" height="12"><path d="M2.5 1.5 L7 6 L2.5 10.5" fill="none" stroke="#8e96a8" stroke-width="2.2"/></svg>
</div></body></html>
